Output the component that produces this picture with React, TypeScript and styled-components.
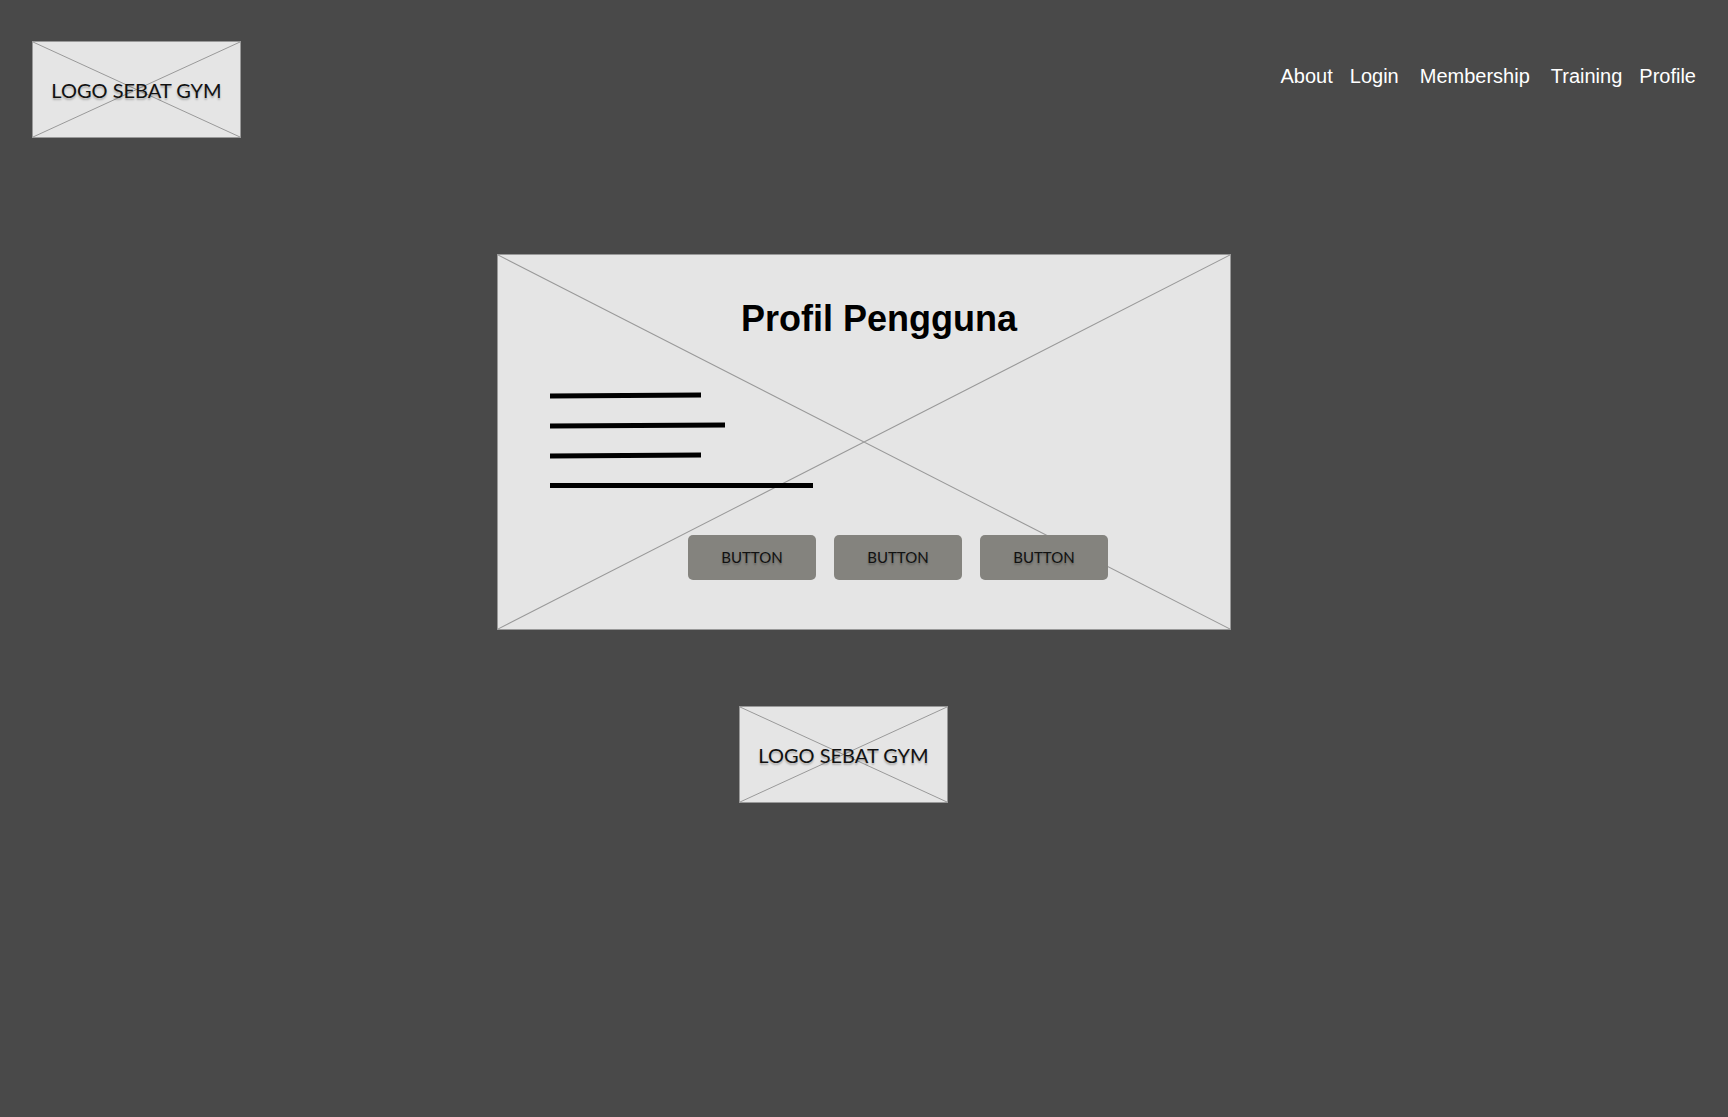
import React from "react";
import styled, { createGlobalStyle } from "styled-components";

const GlobalStyle = createGlobalStyle`
  *, *::before, *::after { box-sizing: border-box; }
  body {
    margin: 0;
    background: #494949;
    font-family: "Liberation Sans", Arial, sans-serif;
  }
`;

const Page = styled.div`
  display: flex;
  flex-direction: column;
  min-height: 100vh;
`;

const Header = styled.header`
  display: flex;
  justify-content: space-between;
  align-items: flex-start;
  padding: 41px 32px 0;
`;

const Nav = styled.nav`
  display: flex;
  flex-wrap: wrap;
  gap: 21px;
  padding-top: 23px;
`;

const NavGroup = styled.div`
  display: flex;
  gap: 17px;
`;

const NavLink = styled.a`
  color: #ffffff;
  font-size: 20px;
  line-height: 24px;
  text-decoration: none;
`;

const Frame = styled.div`
  position: relative;
  background: #e5e5e5;
  border: 1px solid #999999;
`;

const CrossSvg = styled.svg`
  position: absolute;
  inset: 0;
  width: 100%;
  height: 100%;
`;

const LogoFrame = styled(Frame)`
  display: flex;
  align-items: center;
  justify-content: center;
  width: 209px;
  height: 97px;
`;

const LogoText = styled.span`
  position: relative;
  color: #111111;
  font-family: Lato, sans-serif;
  font-size: 20px;
  line-height: 30px;
  white-space: nowrap;
  text-shadow: 0 2px 2px rgba(0, 0, 0, 0.25);
`;

const Main = styled.main`
  display: flex;
  justify-content: center;
  padding: 116px 32px 76px;
`;

const ProfileCard = styled(Frame)`
  width: 100%;
  max-width: 734px;
  padding: 44px 52px 49px;
`;

const CardContent = styled.div`
  position: relative;
  display: flex;
  flex-direction: column;
`;

const Title = styled.h1`
  margin: 0;
  padding-left: 30px;
  color: #000000;
  font-size: 36px;
  line-height: 40px;
  text-align: center;
`;

const Lines = styled.div`
  display: flex;
  flex-direction: column;
  gap: 25px;
  padding-top: 54px;
`;

const Line = styled.div<{ $width: number; $tilted?: boolean }>`
  width: ${(p) => p.$width}px;
  height: 5px;
  background: #000000;
  transform: ${(p) => (p.$tilted ? "skewY(-0.4deg)" : "none")};
`;

const Actions = styled.div`
  display: flex;
  justify-content: center;
  gap: 18px;
  padding: 47px 0 0 68px;
`;

const ActionButton = styled.button`
  width: 128px;
  height: 45px;
  padding: 0 0 2px;
  border: 0;
  border-radius: 5px;
  background: #84837e;
  color: #111111;
  font-family: Lato, sans-serif;
  font-size: 15px;
  line-height: 24px;
  text-shadow: 0 2px 2px rgba(0, 0, 0, 0.25);
  cursor: pointer;
`;

const Footer = styled.footer`
  display: flex;
  justify-content: center;
  padding: 0 41px 32px 0;
`;

const linkGroups = [["About", "Login"], ["Membership"], ["Training", "Profile"]];

function Cross() {
  return (
    <CrossSvg viewBox="0 0 100 100" preserveAspectRatio="none" aria-hidden="true">
      <path
        d="M0 0 L100 100 M100 0 L0 100"
        stroke="#999999"
        strokeWidth="1"
        fill="none"
        vectorEffect="non-scaling-stroke"
      />
    </CrossSvg>
  );
}

function Logo() {
  return (
    <LogoFrame>
      <Cross />
      <LogoText>LOGO SEBAT GYM</LogoText>
    </LogoFrame>
  );
}

export default function App() {
  return (
    <Page>
      <GlobalStyle />
      <Header>
        <Logo />
        <Nav>
          {linkGroups.map((group) => (
            <NavGroup key={group[0]}>
              {group.map((label) => (
                <NavLink key={label} href={`#${label.toLowerCase()}`}>
                  {label}
                </NavLink>
              ))}
            </NavGroup>
          ))}
        </Nav>
      </Header>
      <Main>
        <ProfileCard>
          <Cross />
          <CardContent>
            <Title>Profil Pengguna</Title>
            <Lines>
              <Line $width={151} $tilted />
              <Line $width={175} $tilted />
              <Line $width={151} $tilted />
              <Line $width={263} />
            </Lines>
            <Actions>
              <ActionButton type="button">BUTTON</ActionButton>
              <ActionButton type="button">BUTTON</ActionButton>
              <ActionButton type="button">BUTTON</ActionButton>
            </Actions>
          </CardContent>
        </ProfileCard>
      </Main>
      <Footer>
        <Logo />
      </Footer>
    </Page>
  );
}
